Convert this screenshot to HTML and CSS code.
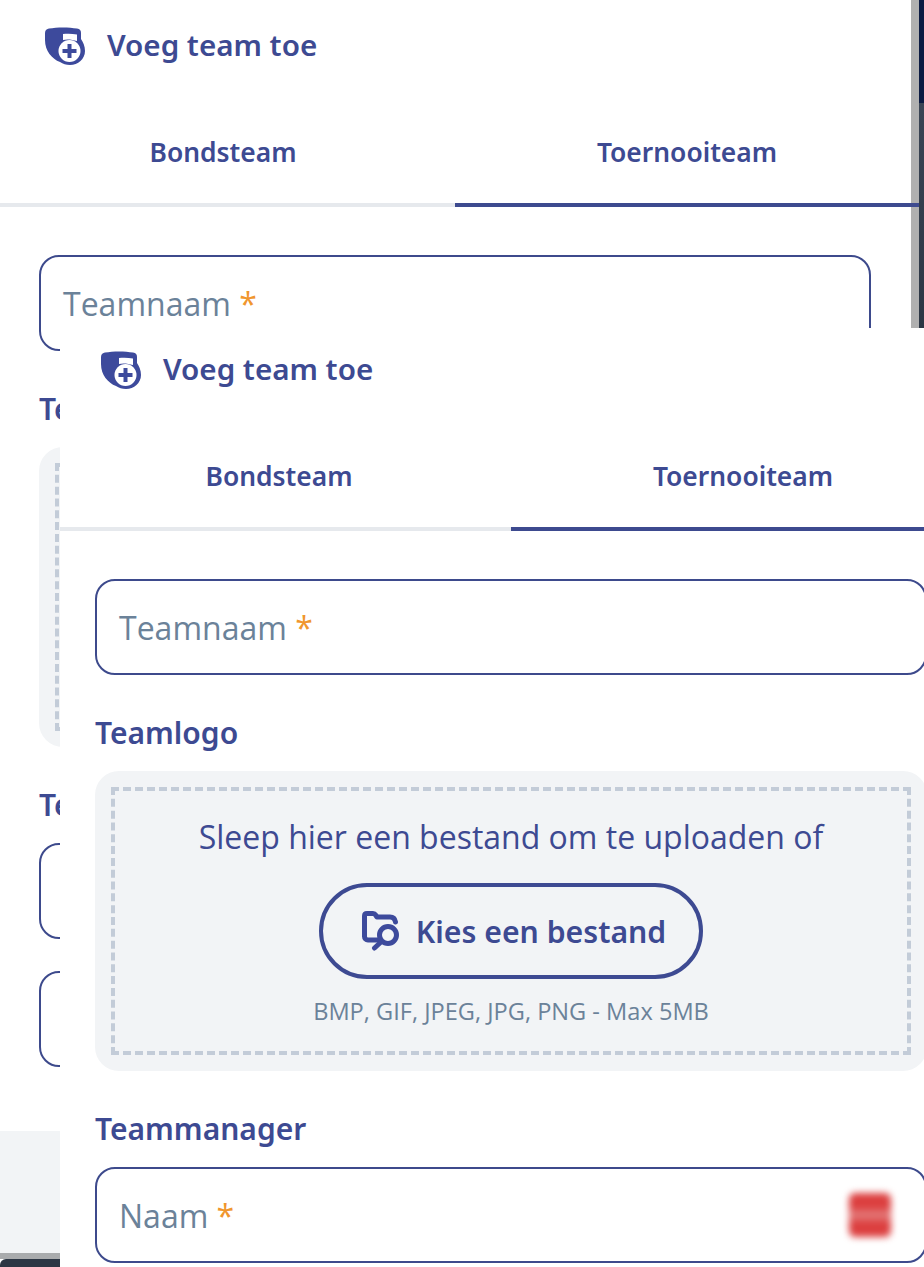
FILE: index.html
```html
<!DOCTYPE html>
<html lang="en">

<head>
    <meta charset="UTF-8">
    <meta name="viewport" content="width=device-width, initial-scale=1.0">
    <title>Voeg team toe</title>
    <link rel="stylesheet" href="styles.css">
</head>

<body>
    <div class="screen">
        <!-- onderste dialoog -->
        <div class="dialog">
            <div class="head">
                <svg class="head-icon" viewBox="0 0 40 38">
                    <path class="fill" d="M0 6C0 3 2 2 4 1.500C12 0 24 0 32 1.500C35 2 36 3.500 36 6V12C38 15 40 19 40 24C40 32 33 38 25 38C21 38 18 37 15 35C7 32 0 24 0 13Z" />
                    <path class="hole" d="M18 7C22 6.500 27 6.500 32 7.500V14C27 12.500 22 12 18 13Z" />
                    <circle class="hole" cx="24.500" cy="24" r="11" />
                    <path class="plus" d="M24.500 17V31M17.500 24H31.500" />
                </svg>
                <span class="head-text">Voeg team toe</span>
            </div>
            <div class="tabs">
                <div class="tab">Bondsteam</div>
                <div class="tab active">Toernooiteam</div>
            </div>
            <div class="form">
                <div class="input"><span>Teamnaam <i class="req">*</i></span></div>
                <div class="label">Teamlogo</div>
                <div class="upload">
                    <div class="drop">
                        <div class="drop-text">Sleep hier een bestand om te uploaden of</div>
                        <div class="pick">
                            <svg class="pick-icon" viewBox="0 0 38 40">
                                <path class="line" d="M17 29H6C4 29 2.500 27.500 2.500 25.500V5C2.500 3.500 3.500 2.500 5 2.500H11C12.500 2.500 13 3 14 4.500L15 6H28C31 6 33 8 33.500 11" />
                                <circle class="line" cx="26" cy="24" r="8.500" />
                                <path class="line" d="M19.500 30.500L12.500 37" />
                            </svg>
                            <span>Kies een bestand</span>
                        </div>
                        <div class="drop-hint">BMP, GIF, JPEG, JPG, PNG - Max 5MB</div>
                    </div>
                </div>
                <div class="label">Teammanager</div>
                <div class="input"><span>Naam <i class="req">*</i></span><div class="blur"></div></div>
                <div class="input second"><span>E-mail <i class="req">*</i></span></div>
            </div>
        </div>
        <div class="foot"></div>
        <div class="foot-line"></div>
        <div class="foot-dark"></div>

        <!-- scrollbalk -->
        <div class="bar"><div class="bar-top"></div></div>

        <!-- bovenste dialoog -->
        <div class="overlay">
            <div class="dialog shifted">
                <div class="head">
                    <svg class="head-icon" viewBox="0 0 40 38">
                        <path class="fill" d="M0 6C0 3 2 2 4 1.500C12 0 24 0 32 1.500C35 2 36 3.500 36 6V12C38 15 40 19 40 24C40 32 33 38 25 38C21 38 18 37 15 35C7 32 0 24 0 13Z" />
                        <path class="hole" d="M18 7C22 6.500 27 6.500 32 7.500V14C27 12.500 22 12 18 13Z" />
                        <circle class="hole" cx="24.500" cy="24" r="11" />
                        <path class="plus" d="M24.500 17V31M17.500 24H31.500" />
                    </svg>
                    <span class="head-text">Voeg team toe</span>
                </div>
                <div class="tabs">
                    <div class="tab">Bondsteam</div>
                    <div class="tab active">Toernooiteam</div>
                </div>
                <div class="form">
                    <div class="input"><span>Teamnaam <i class="req">*</i></span></div>
                    <div class="label">Teamlogo</div>
                    <div class="upload">
                        <div class="drop">
                            <div class="drop-text">Sleep hier een bestand om te uploaden of</div>
                            <div class="pick">
                                <svg class="pick-icon" viewBox="0 0 38 40">
                                    <path class="line" d="M17 29H6C4 29 2.500 27.500 2.500 25.500V5C2.500 3.500 3.500 2.500 5 2.500H11C12.500 2.500 13 3 14 4.500L15 6H28C31 6 33 8 33.500 11" />
                                    <circle class="line" cx="26" cy="24" r="8.500" />
                                    <path class="line" d="M19.500 30.500L12.500 37" />
                                </svg>
                                <span>Kies een bestand</span>
                            </div>
                            <div class="drop-hint">BMP, GIF, JPEG, JPG, PNG - Max 5MB</div>
                        </div>
                    </div>
                    <div class="label">Teammanager</div>
                    <div class="input"><span>Naam <i class="req">*</i></span><div class="blur"></div></div>
                </div>
            </div>
        </div>
    </div>
</body>

</html>
```

FILE: styles.css
```css
* {
    padding: 0;
    margin: 0;
    box-sizing: border-box;
}

body {
    background-color: #fff;
    color: #3d4a92;
    font-family: "Open Sans", "Noto Sans", sans-serif;
}

.screen {
    position: relative;
    width: 924px;
    height: 1267px;
    overflow: hidden;
}

/* dialoog */
.dialog {
    width: 919px;
}

.head {
    display: flex;
    align-items: center;
    gap: 22px;
    height: 92px;
    padding-left: 45px;
}

.head-icon {
    width: 40px;
    height: 38px;
    flex-shrink: 0;
}

.fill {
    fill: #3d4a9c;
}

.hole {
    fill: #fff;
}

.plus {
    fill: none;
    stroke: #3d4a9c;
    stroke-width: 4;
}

.head-text {
    padding-bottom: 4px;
    font-family: "Noto Sans", sans-serif;
    font-size: 29.600px;
    font-weight: 600;
}

/* tabs */
.tabs {
    display: grid;
    grid-template-columns: 1fr 1fr;
    width: 928px;
    margin-left: -9px;
    padding-top: 8px;
}

.tab {
    display: flex;
    align-items: center;
    justify-content: center;
    height: 107px;
    padding-top: 1px;
    border-bottom: 4px solid #e6e9ed;
    font-family: "Noto Sans", sans-serif;
    font-size: 26.400px;
    font-weight: 600;
}

.tab.active {
    border-bottom-color: #3d4a8f;
}

.form {
    width: 919px;
    padding: 48px 48px 0 39px;
}

.input {
    display: flex;
    align-items: center;
    justify-content: space-between;
    height: 96px;
    padding: 0 34px 0 22px;
    border: 2px solid #3d4a8c;
    border-radius: 20px;
    background-color: #fff;
    color: #6b8299;
    font-size: 32px;
}

.input.second {
    margin-top: 32px;
}

.req {
    color: #f0962e;
    font-style: normal;
}

.label {
    height: 40px;
    margin: 38px 0 18px;
    font-family: "Noto Sans", sans-serif;
    font-size: 30px;
    font-weight: 600;
    line-height: 40px;
}

/* upload */
.upload {
    height: 300px;
    padding: 16px;
    border-radius: 24px;
    background-color: #f2f4f6;
}

.drop {
    display: flex;
    flex-direction: column;
    align-items: center;
    height: 100%;
    padding-top: 26px;
    border: 4px dashed #c3ccd8;
}

.drop-text {
    font-size: 32px;
    line-height: 40px;
}

.pick {
    display: flex;
    align-items: center;
    justify-content: center;
    gap: 16px;
    width: 384px;
    height: 96px;
    margin-top: 26px;
    padding-left: 6px;
    border: 4px solid #3d4a92;
    border-radius: 48px;
    font-family: "Noto Sans", sans-serif;
    font-size: 30.200px;
    font-weight: 600;
}

.pick-icon {
    width: 38px;
    height: 40px;
}

.line {
    fill: none;
    stroke: #3d4a9c;
    stroke-width: 5;
    stroke-linecap: round;
    stroke-linejoin: round;
}

.drop-hint {
    margin-top: 16px;
    color: #6b8299;
    font-size: 23.600px;
    line-height: 32px;
}

.blur {
    width: 42px;
    height: 44px;
    border-radius: 6px;
    background: linear-gradient(#dc3f3f 0 34%, #e27272 42% 58%, #dc3f3f 66%);
    filter: blur(3.500px);
}

/* onderkant */
.foot {
    height: 122px;
    margin-top: 64px;
    background-color: #f2f4f6;
}

.foot-line {
    height: 6px;
    background-color: #a9abad;
}

.foot-dark {
    height: 8px;
    border-top-left-radius: 6px;
    background-color: #2c3644;
}

/* scrollbalk */
.bar {
    position: absolute;
    top: 0;
    left: 911px;
    width: 13px;
    height: 328px;
    border-left: 8px solid #b0b0b0;
    background: linear-gradient(#414b5c, #2c3644);
}

.bar-top {
    height: 103px;
    background-color: #0b1a42;
}

/* tabs lopen over de scrollbalk */
.screen > .dialog .tabs {
    position: relative;
    z-index: 1;
}

.overlay {
    position: absolute;
    z-index: 2;
    top: 328px;
    left: 60px;
    width: 864px;
    height: 939px;
    overflow: hidden;
    background-color: #fff;
}

.dialog.shifted {
    margin: -4px 0 0 -4px;
}
```
